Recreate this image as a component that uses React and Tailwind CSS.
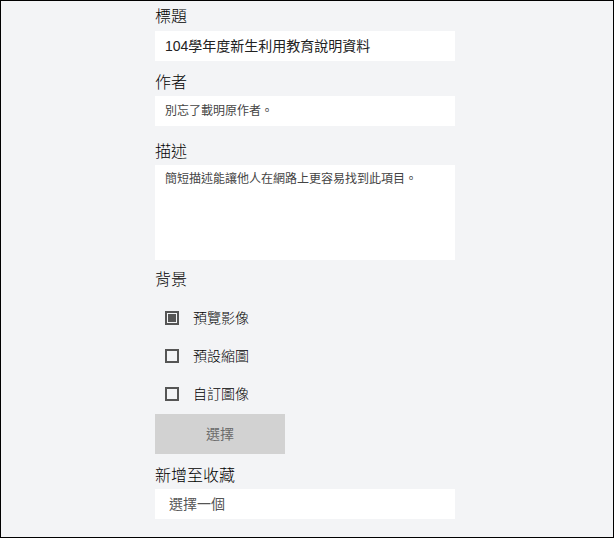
import React from 'react';

const font = { fontFamily: '"Liberation Sans", "Noto Sans CJK TC", sans-serif' };

const Label = ({ children, className = '' }) => (
  <div className={`text-[16px] font-light leading-[22px] text-black ${className}`}>{children}</div>
);

const Checkbox = ({ checked, label }) => (
  <div className="flex h-[38px] items-center pl-[10px]">
    <span className="flex h-[14px] w-[14px] items-center justify-center border-2 border-[#555]">
      {checked && <span className="h-[8px] w-[8px] bg-[#555]" />}
    </span>
    <span className="ml-[14px] text-[14px] font-light leading-[20px] text-black">{label}</span>
  </div>
);

export default function App() {
  return (
    <div
      className="box-border h-[538px] w-[614px] border border-black bg-[#f3f4f6]"
      style={font}
    >
      <div className="ml-[154px] w-[300px] pt-[5px]">
        <Label>標題</Label>
        <div className="mt-[3px] flex h-[30px] items-center bg-white pl-[10px] text-[14px] text-[#222]">
          104學年度新生利用教育說明資料
        </div>

        <Label className="mt-[11px]">作者</Label>
        <div className="mt-[2px] flex h-[30px] items-center bg-white pl-[10px] text-[12px] text-[#444]">
          別忘了載明原作者。
        </div>

        <Label className="mt-[15px]">描述</Label>
        <div className="mt-[2px] h-[95px] bg-white pl-[10px] pt-[5px] text-[12px] leading-[18px] text-[#444]">
          簡短描述能讓他人在網路上更容易找到此項目。
        </div>

        <Label className="mt-[9px]">背景</Label>
        <div className="mt-[8px]">
          <Checkbox checked label="預覽影像" />
          <Checkbox label="預設縮圖" />
          <Checkbox label="自訂圖像" />
        </div>

        <button
          type="button"
          className="mt-[1px] flex h-[40px] w-[130px] items-center justify-center bg-[#d2d2d2] text-[14px] text-[#6b6b6b]"
        >
          選擇
        </button>

        <Label className="mt-[11px]">新增至收藏</Label>
        <div className="mt-[2px] flex h-[30px] items-center bg-white pl-[14px] text-[14px] text-[#555]">
          選擇一個
        </div>
      </div>
    </div>
  );
}
